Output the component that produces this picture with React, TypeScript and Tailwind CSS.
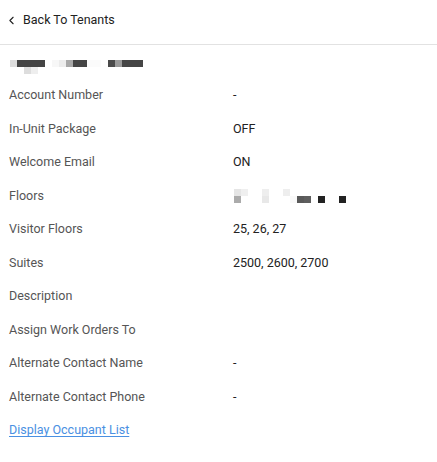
import { ChevronLeft } from "lucide-react"

type Block = { x: number; y: number; w: number; c: string }

// pixelated (redacted) text, 7px cells
function Pixels({ blocks, width }: { blocks: Block[]; width: number }) {
  return (
    <div className="relative h-[14px]" style={{ width }}>
      {blocks.map((b, i) => (
        <span
          key={i}
          className="absolute h-[7px]"
          style={{ left: b.x, top: b.y, width: b.w, background: b.c }}
        />
      ))}
    </div>
  )
}

const titleBlocks: Block[] = [
  { x: 0, y: 0, w: 7, c: "#dddddd" },
  { x: 7, y: 0, w: 28, c: "#444444" },
  { x: 42, y: 0, w: 7, c: "#f7f7f7" },
  { x: 49, y: 0, w: 7, c: "#ececec" },
  { x: 56, y: 0, w: 7, c: "#a8a8a8" },
  { x: 63, y: 0, w: 14, c: "#454545" },
  { x: 77, y: 0, w: 14, c: "#fbfbfb" },
  { x: 98, y: 0, w: 7, c: "#4a4a4a" },
  { x: 105, y: 0, w: 7, c: "#999999" },
  { x: 112, y: 0, w: 21, c: "#454545" },
  { x: 14, y: 7, w: 7, c: "#dddddd" },
  { x: 21, y: 7, w: 7, c: "#eeeeee" },
]

const floorBlocks: Block[] = [
  { x: 1, y: 0, w: 7, c: "#e5e5e5" },
  { x: 8, y: 0, w: 7, c: "#efefef" },
  { x: 29, y: 0, w: 7, c: "#eeeeee" },
  { x: 50, y: 0, w: 7, c: "#eeeeee" },
  { x: 1, y: 7, w: 7, c: "#ababab" },
  { x: 29, y: 7, w: 7, c: "#e8e8e8" },
  { x: 57, y: 7, w: 7, c: "#f9f9f9" },
  { x: 64, y: 7, w: 7, c: "#595959" },
  { x: 71, y: 7, w: 7, c: "#5e5e5e" },
  { x: 85, y: 7, w: 7, c: "#222222" },
  { x: 106, y: 7, w: 7, c: "#222222" },
]

const rows: { label: string; value?: React.ReactNode }[] = [
  { label: "Account Number", value: "-" },
  { label: "In-Unit Package", value: "OFF" },
  { label: "Welcome Email", value: "ON" },
  { label: "Floors", value: <Pixels blocks={floorBlocks} width={114} /> },
  { label: "Visitor Floors", value: "25, 26, 27" },
  { label: "Suites", value: "2500, 2600, 2700" },
  { label: "Description" },
  { label: "Assign Work Orders To" },
  { label: "Alternate Contact Name", value: "-" },
  { label: "Alternate Contact Phone", value: "-" },
]

export default function App() {
  return (
    <div className="min-h-[462px] w-full bg-white font-['Roboto',sans-serif] text-[12.5px] text-[#222]">
      {/* Header */}
      <div className="flex h-[45px] items-center border-b border-[#e2e2e2] pl-[5px]">
        <button className="flex items-center pb-[3px] text-[#222]">
          <ChevronLeft className="h-[13px] w-[13px]" strokeWidth={2} />
          <span className="ml-[5px]">Back To Tenants</span>
        </button>
      </div>

      <div className="px-[9px]">
        {/* Tenant name */}
        <div className="mt-[15px] mb-[5px] ml-[1px]">
          <Pixels blocks={titleBlocks} width={133} />
        </div>

        {rows.map((row) => (
          <div key={row.label} className="flex h-[33.5px] items-center">
            <div className="w-[224px] shrink-0 text-[#555]">{row.label}</div>
            <div className="text-[#222]">{row.value}</div>
          </div>
        ))}

        <div className="flex h-[33.5px] items-center">
          <a href="#" className="text-[#4a90e2] underline underline-offset-2">
            Display Occupant List
          </a>
        </div>
      </div>
    </div>
  )
}
